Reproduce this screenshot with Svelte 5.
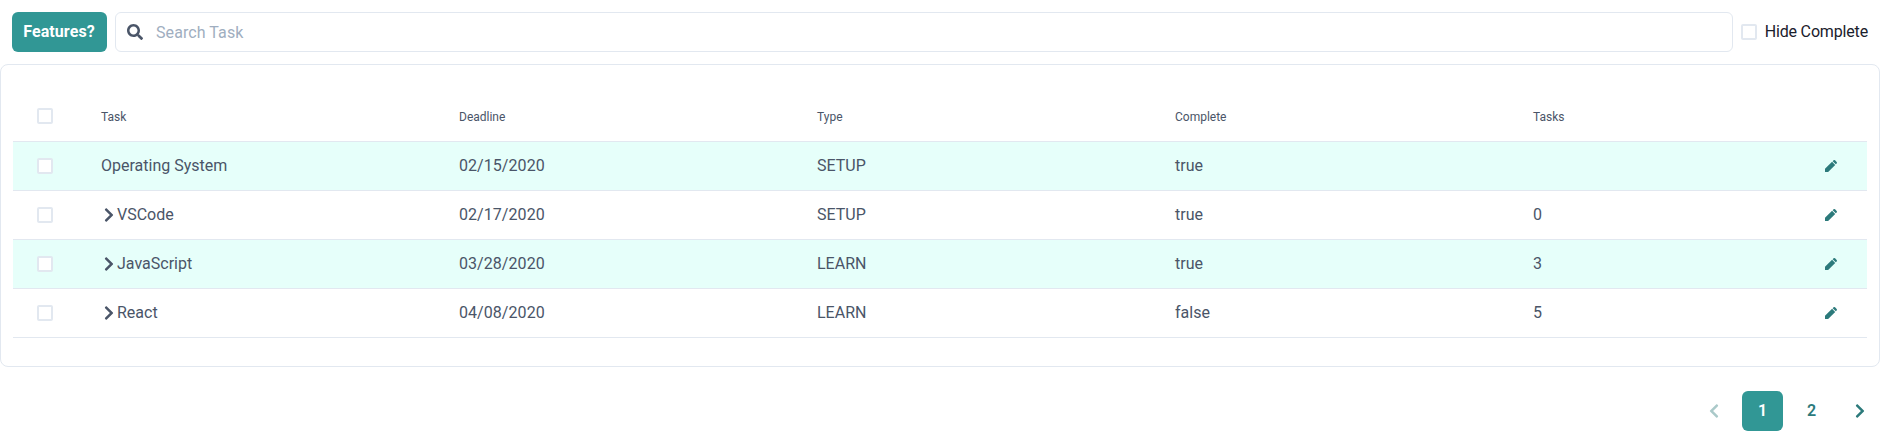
<script>
  const headers = ['Task', 'Deadline', 'Type', 'Complete', 'Tasks'];
  const rows = [
    { name: 'Operating System', deadline: '02/15/2020', type: 'SETUP', complete: 'true', tasks: '', parent: false },
    { name: 'VSCode', deadline: '02/17/2020', type: 'SETUP', complete: 'true', tasks: '0', parent: true },
    { name: 'JavaScript', deadline: '03/28/2020', type: 'LEARN', complete: 'true', tasks: '3', parent: true },
    { name: 'React', deadline: '04/08/2020', type: 'LEARN', complete: 'false', tasks: '5', parent: true },
  ];
  const right = 'M285.476 272.971L91.132 467.314c-9.373 9.373-24.569 9.373-33.941 0l-22.667-22.667c-9.357-9.357-9.375-24.522-.04-33.901L188.505 256 34.484 101.255c-9.335-9.379-9.317-24.544.04-33.901l22.667-22.667c9.373-9.373 24.569-9.373 33.941 0L285.475 239.03c9.373 9.372 9.373 24.568.001 33.941z';
  const left = 'M34.52 239.03L228.87 44.69c9.37-9.37 24.57-9.37 33.94 0l22.67 22.67c9.36 9.36 9.37 24.52.04 33.9L131.49 256l154.02 154.75c9.34 9.38 9.32 24.54-.04 33.9l-22.67 22.67c-9.37 9.37-24.57 9.37-33.94 0L34.52 272.97c-9.37-9.37-9.37-24.57 0-33.94z';
</script>

{#snippet chevron(d)}
  <svg class="icon" viewBox="0 0 320 512"><path {d} /></svg>
{/snippet}

<div class="toolbar">
  <button class="features">Features?</button>
  <label class="search">
    <svg class="icon" viewBox="0 0 512 512"><path d="M505 442.7L405.3 343c-4.500-4.500-10.600-7-17-7H372c27.600-35.300 44-79.700 44-128C416 93.100 322.900 0 208 0S0 93.100 0 208s93.100 208 208 208c48.300 0 92.700-16.400 128-44v16.300c0 6.400 2.500 12.500 7 17l99.700 99.700c9.400 9.400 24.600 9.400 33.900 0l28.300-28.300c9.400-9.400 9.400-24.600.1-34zM208 336c-70.700 0-128-57.200-128-128 0-70.700 57.200-128 128-128 70.700 0 128 57.200 128 128 0 70.700-57.200 128-128 128z" /></svg>
    <input placeholder="Search Task" />
  </label>
  <label class="hide"><span class="box"></span>Hide Complete</label>
</div>

<div class="card">
  <div class="row head">
    <span class="box"></span>
    {#each headers as header}<span>{header}</span>{/each}
  </div>
  {#each rows as row}
    <div class="row">
      <span class="box"></span>
      <span class="name">{#if row.parent}{@render chevron(right)}{/if}{row.name}</span>
      <span class="date">{row.deadline}</span>
      <span>{row.type}</span>
      <span>{row.complete}</span>
      <span>{row.tasks}</span>
      <svg class="icon edit" viewBox="0 0 24 24"><path d="M3 16.300V21h4.700L18.300 10.400l-4.700-4.700L3 16.300zM20.500 8.200a1.700 1.700 0 0 0 0-2.300l-2.400-2.400a1.700 1.700 0 0 0-2.300 0l-1.300 1.300 4.700 4.700 1.300-1.300z" /></svg>
    </div>
  {/each}
</div>

<div class="pager">
  <button class="prev" disabled>{@render chevron(left)}</button>
  <button class="current">1</button>
  <button class="page">2</button>
  <button class="next">{@render chevron(right)}</button>
</div>

<style>
  :global(body) { margin: 0; background: #fff; overflow: hidden; }
  :global(#app) { font: 16px/24px Roboto, sans-serif; color: #1a202c; }
  .toolbar, .toolbar *, .card, .card *, .pager, .pager * { box-sizing: border-box; }
  button { border: 0; padding: 0; margin: 0; background: none; font: inherit; border-radius: 6px; }
  .icon { display: block; width: 16px; height: 16px; flex: none; fill: currentColor; }
  .toolbar { display: flex; align-items: center; gap: 8px; padding: 12px; }
  .features { width: 95px; height: 40px; padding-right: 1px; background: #319795; color: #fff; font-weight: 700; letter-spacing: .1px; }
  .search { flex: 1; height: 40px; display: flex; align-items: center; gap: 13px; padding: 0 11px; border: 1px solid #e2e8f0; border-radius: 6px; color: #4a5568; }
  input { flex: 1; border: 0; outline: 0; padding: 2px 0 0; background: none; font: inherit; letter-spacing: .08px; }
  input::placeholder { color: #a0aec0; opacity: 1; }
  .hide { display: flex; align-items: center; gap: 8px; white-space: nowrap; letter-spacing: -.16px; }
  .box { width: 16px; height: 16px; flex: none; border: 2px solid #e2e8f0; border-radius: 2px; background: #fff; }
  .card { border: 1px solid #e2e8f0; border-radius: 8px; height: 303px; padding: 27px 12px 0; }
  .row { display: grid; grid-template-columns: 64px repeat(4, 358px) 290px 16px; align-items: center; height: 49px; padding-left: 24px; border-bottom: 1px solid #e2e8f0; color: #4a5568; }
  .row:nth-child(even) { background: #e6fffa; }
  .head { height: 50px; font-size: 12px; line-height: 16px; }
  .head .box { margin-bottom: 1px; }
  .name { display: flex; align-items: center; }
  .date { letter-spacing: .06px; }
  .edit { color: #2c7a7b; }
  .pager { display: flex; align-items: center; justify-content: flex-end; margin-top: 24px; color: #2c7a7b; font-weight: 600; }
  .prev { opacity: .4; margin-right: 20px; color: inherit; }
  .current { width: 41px; height: 40px; background: #319795; color: #fff; }
  .page { width: 41px; height: 40px; margin-left: 8px; color: inherit; }
  .next { margin: 0 12px 0 20px; color: inherit; }
</style>
